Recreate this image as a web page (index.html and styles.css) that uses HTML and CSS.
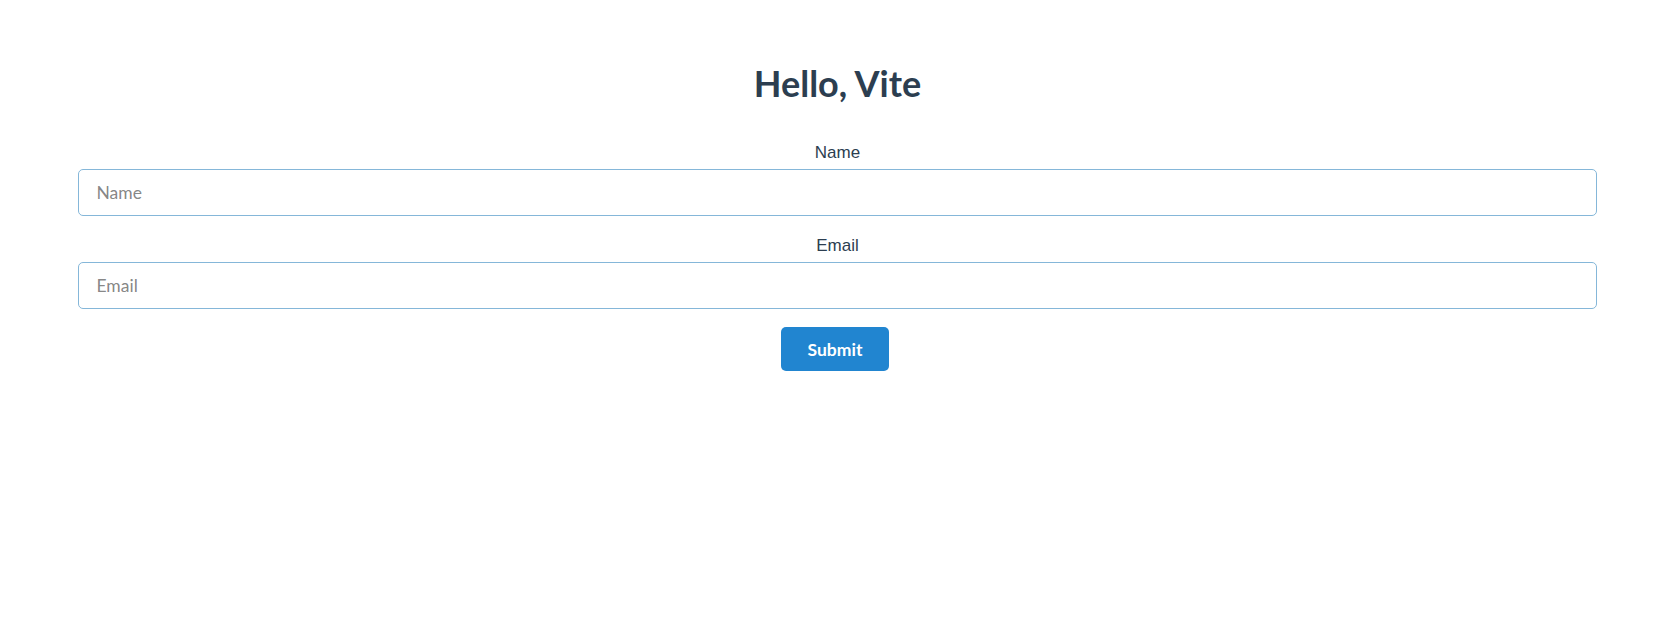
FILE: index.html
```html
<!DOCTYPE html>
<html lang="en">
<head>
<meta charset="utf-8">
<title>Hello, Vite</title>
<link rel="stylesheet" href="styles.css">
</head>
<body>
<div class="app">
  <h1 class="title">Hello, Vite</h1>
  <form class="form">
    <div class="field">
      <label class="label" for="name">Name</label>
      <input class="input" id="name" type="text" placeholder="Name">
    </div>
    <div class="field">
      <label class="label" for="email">Email</label>
      <input class="input" id="email" type="email" placeholder="Email">
    </div>
    <div class="actions">
      <button class="button" type="button">Submit</button>
    </div>
  </form>
</div>
</body>
</html>
```
FILE: styles.css
```css
html, body {
  margin: 0;
  padding: 0;
  background: #ffffff;
}
body {
  font-family: Lato, "Liberation Sans", Arial, sans-serif;
  color: #2c3e50;
}
.app {
  display: flex;
  flex-direction: column;
  align-items: center;
  padding: 61px 75px 0 78px;
}
.title {
  margin: 0;
  font-family: Lato, sans-serif;
  font-weight: 700;
  font-size: 36px;
  line-height: 45px;
  color: #2c3e50;
}
.form {
  align-self: stretch;
  display: flex;
  flex-direction: column;
  margin-top: 37px;
}
.field {
  display: flex;
  flex-direction: column;
  align-items: center;
  gap: 6px;
  margin-bottom: 20px;
}
.label {
  font-family: "Liberation Sans", Arial, sans-serif;
  font-size: 17px;
  line-height: 20px;
  color: #2c3e50;
}
.input {
  align-self: stretch;
  box-sizing: border-box;
  height: 47px;
  margin: 0;
  padding: 0 17.5px;
  font-family: Lato, sans-serif;
  font-size: 17.5px;
  color: rgba(0, 0, 0, 0.87);
  background: #ffffff;
  border: 1px solid #85b7d9;
  border-radius: 5px;
  outline: none;
}
.input::placeholder {
  color: rgba(115, 115, 115, 0.87);
}
.actions {
  display: flex;
  justify-content: center;
  margin-top: -2px;
  padding-right: 5px;
}
.button {
  box-sizing: border-box;
  width: 108px;
  height: 44px;
  padding: 0;
  font-family: Lato, sans-serif;
  font-weight: 700;
  font-size: 17.5px;
  color: #ffffff;
  background: #2185d0;
  border: none;
  border-radius: 5px;
  cursor: pointer;
}
```
